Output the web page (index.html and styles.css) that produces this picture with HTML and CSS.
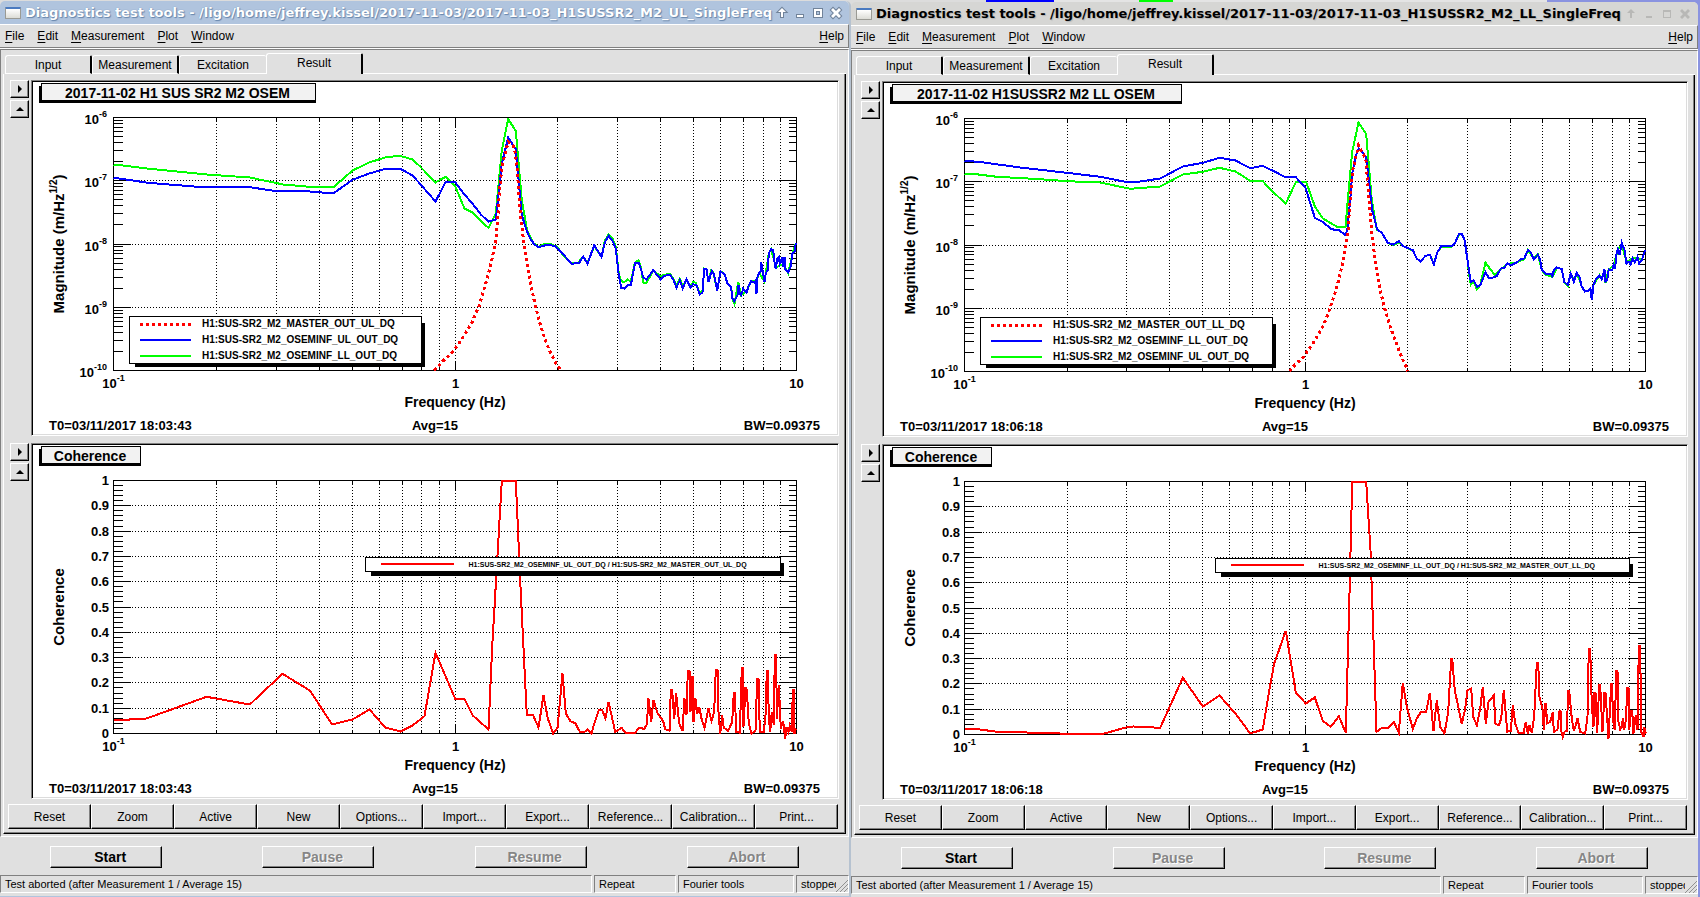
FILE: index.html
```html
<!DOCTYPE html>
<html lang="en">
<head>
  <meta charset="UTF-8" />
  <meta name="viewport" content="width=device-width, initial-scale=1.0" />
  <title>Diagnostics test tools</title>
  <link rel="stylesheet" href="styles.css">
</head>
<body>
  <section class="window active">
    <header class="titlebar">
      <span class="app-icon"></span>
      <h1>Diagnostics test tools - /ligo/home/jeffrey.kissel/2017-11-03/2017-11-03_H1SUSSR2_M2_UL_SingleFreq</h1>
      <div class="controls">
        <button aria-label="Shade"><svg viewBox="0 0 12 12"><path d="M6 1 L10 5 L7 5 L7 10 L5 10 L5 5 L2 5 Z"/></svg></button>
        <button aria-label="Minimize"><svg viewBox="0 0 12 12"><path d="M3 8 H9 V10 H3 Z"/></svg></button>
        <button aria-label="Maximize"><svg viewBox="0 0 12 12"><path fill-rule="evenodd" d="M2 2 H10 V10 H2 Z M4 4 V8 H8 V4 Z"/></svg></button>
        <button aria-label="Close"><svg viewBox="0 0 12 12"><path d="M3 1 L6 4 L9 1 L11 3 L8 6 L11 9 L9 11 L6 8 L3 11 L1 9 L4 6 L1 3 Z"/></svg></button>
      </div>
    </header>
    <nav class="menubar">
      <button><u>F</u>ile</button>
      <button><u>E</u>dit</button>
      <button><u>M</u>easurement</button>
      <button><u>P</u>lot</button>
      <button><u>W</u>indow</button>
      <button class="help"><u>H</u>elp</button>
    </nav>
    <main class="frame">
      <div class="tabs" role="tablist">
        <button role="tab">Input</button>
        <button role="tab">Measurement</button>
        <button role="tab">Excitation</button>
        <button role="tab" class="selected" aria-selected="true">Result</button>
        <span class="tab-rest"></span>
      </div>
      <div class="pane">
        <div class="plot-row">
          <div class="plot-tools">
            <button aria-label="Expand options"><span class="right"></span></button>
            <button aria-label="Maximize pad"><span class="up"></span></button>
          </div>
          <div class="pad"><svg class="plot" data-plot="ulMagnitude"></svg></div>
        </div>
        <div class="plot-row">
          <div class="plot-tools">
            <button aria-label="Expand options"><span class="right"></span></button>
            <button aria-label="Maximize pad"><span class="up"></span></button>
          </div>
          <div class="pad"><svg class="plot" data-plot="ulCoherence"></svg></div>
        </div>
        <div class="actions">
          <button>Reset</button>
          <button>Zoom</button>
          <button>Active</button>
          <button>New</button>
          <button>Options...</button>
          <button>Import...</button>
          <button>Export...</button>
          <button>Reference...</button>
          <button>Calibration...</button>
          <button>Print...</button>
        </div>
      </div>
    </main>
    <div class="run">
      <button>Start</button>
      <button disabled>Pause</button>
      <button disabled>Resume</button>
      <button disabled>Abort</button>
    </div>
    <footer class="status">
      <span class="message">Test aborted (after Measurement 1 / Average 15)</span>
      <span class="repeat">Repeat</span>
      <span class="tools">Fourier tools</span>
      <span class="state">stopped</span>
      <svg class="grip" viewBox="0 0 12 12"><path d="M0 12 L12 0 M4 12 L12 4 M8 12 L12 8"/></svg>
    </footer>
  </section>

  <section class="window">
    <header class="titlebar">
      <span class="app-icon"></span>
      <h1>Diagnostics test tools - /ligo/home/jeffrey.kissel/2017-11-03/2017-11-03_H1SUSSR2_M2_LL_SingleFreq</h1>
      <div class="controls">
        <button aria-label="Shade"><svg viewBox="0 0 12 12"><path d="M6 1 L10 5 L7 5 L7 10 L5 10 L5 5 L2 5 Z"/></svg></button>
        <button aria-label="Minimize"><svg viewBox="0 0 12 12"><path d="M3 8 H9 V10 H3 Z"/></svg></button>
        <button aria-label="Maximize"><svg viewBox="0 0 12 12"><path fill-rule="evenodd" d="M2 2 H10 V10 H2 Z M3 4 V9 H9 V4 Z"/></svg></button>
        <button aria-label="Close"><svg viewBox="0 0 12 12"><path d="M3 1 L6 4 L9 1 L11 3 L8 6 L11 9 L9 11 L6 8 L3 11 L1 9 L4 6 L1 3 Z"/></svg></button>
      </div>
    </header>
    <nav class="menubar">
      <button><u>F</u>ile</button>
      <button><u>E</u>dit</button>
      <button><u>M</u>easurement</button>
      <button><u>P</u>lot</button>
      <button><u>W</u>indow</button>
      <button class="help"><u>H</u>elp</button>
    </nav>
    <main class="frame">
      <div class="tabs" role="tablist">
        <button role="tab">Input</button>
        <button role="tab">Measurement</button>
        <button role="tab">Excitation</button>
        <button role="tab" class="selected" aria-selected="true">Result</button>
        <span class="tab-rest"></span>
      </div>
      <div class="pane">
        <div class="plot-row">
          <div class="plot-tools">
            <button aria-label="Expand options"><span class="right"></span></button>
            <button aria-label="Maximize pad"><span class="up"></span></button>
          </div>
          <div class="pad"><svg class="plot" data-plot="llMagnitude"></svg></div>
        </div>
        <div class="plot-row">
          <div class="plot-tools">
            <button aria-label="Expand options"><span class="right"></span></button>
            <button aria-label="Maximize pad"><span class="up"></span></button>
          </div>
          <div class="pad"><svg class="plot" data-plot="llCoherence"></svg></div>
        </div>
        <div class="actions">
          <button>Reset</button>
          <button>Zoom</button>
          <button>Active</button>
          <button>New</button>
          <button>Options...</button>
          <button>Import...</button>
          <button>Export...</button>
          <button>Reference...</button>
          <button>Calibration...</button>
          <button>Print...</button>
        </div>
      </div>
    </main>
    <div class="run">
      <button>Start</button>
      <button disabled>Pause</button>
      <button disabled>Resume</button>
      <button disabled>Abort</button>
    </div>
    <footer class="status">
      <span class="message">Test aborted (after Measurement 1 / Average 15)</span>
      <span class="repeat">Repeat</span>
      <span class="tools">Fourier tools</span>
      <span class="state">stopped</span>
      <svg class="grip" viewBox="0 0 12 12"><path d="M0 12 L12 0 M4 12 L12 4 M8 12 L12 8"/></svg>
    </footer>
  </section>

  <script src="plots.js"></script>
</body>
</html>
```
FILE: styles.css
```css
* {
  box-sizing: border-box;
}
body {
  margin: 0;
  height: 100vh;
  min-height: 600px;
  padding: 1px 2px 0 0;
  display: grid;
  grid-template-columns: 851fr 847fr;
  overflow: hidden;
  font-family: "Liberation Sans", Arial, sans-serif;
  font-size: 12px;
  color: #000;
  background: linear-gradient(to right, #dcdcdc 58%, #0000ff 58%, #0000ff 62%, #e4e4e4 62%, #e4e4e4 67%, #00ff00 67%, #00ff00 69%, #e4e4e4 69%, #e4e4e4 91%, #8a93e0 91%);
}
button {
  font: inherit;
  color: inherit;
  padding: 0;
  border: 0;
  border-radius: 0;
  background: none;
}
.window {
  display: flex;
  flex-direction: column;
  min-width: 0;
  min-height: 0;
  margin-top: 1px;
  background: #e0e0e0;
  border-radius: 5px 5px 0 0;
}
.window.active {
  margin-top: 0;
  border-right: 2px solid #b6c2d0;
  border-bottom: 1px solid #b0c4de;
}

/* title bar */
.titlebar {
  display: flex;
  align-items: center;
  height: 23px;
  flex: none;
  padding: 0 4px 0 5px;
  background: #d6d6d4;
  color: #000;
  border-radius: 5px 5px 0 0;
}
.active .titlebar {
  background: #b0c4de;
  color: #fff;
}
.app-icon {
  width: 16px;
  height: 12px;
  margin-right: 4px;
  flex: none;
  border: 1px solid #9a9a94;
  border-top: 2px solid #4a7ac0;
  border-radius: 1px;
  background: linear-gradient(#fff, #dcdcd6);
}
.titlebar h1 {
  flex: 1;
  margin: 0;
  min-width: 0;
  white-space: nowrap;
  font: bold 13px/20px "DejaVu Sans", sans-serif;
  text-shadow: 1px 1px 1px #b4b4b4;
}
.active .titlebar h1 {
  text-shadow: 1px 1px 1px #6685ab, 0 0 1px #6685ab;
}
.controls {
  display: flex;
}
.controls button {
  width: 18px;
  height: 18px;
  display: flex;
  align-items: center;
  justify-content: center;
}
.controls svg {
  width: 12px;
  height: 12px;
  fill: #b8b8b6;
  overflow: visible;
}
.active .controls svg {
  fill: #fff;
  stroke: #71839a;
  stroke-width: 2;
  paint-order: stroke;
}

/* menus */
.menubar {
  display: flex;
  align-items: center;
  gap: 13px;
  height: 24px;
  flex: none;
  padding: 0 4px 0 5px;
  border-top: 1px solid #fff;
  border-right: 1px solid #808080;
  border-bottom: 1px solid #808080;
}
.menubar u {
  text-underline-offset: 2px;
}
.menubar .help {
  margin-left: auto;
}

/* tabs and pane */
.frame {
  flex: 1;
  display: flex;
  flex-direction: column;
  min-height: 0;
  margin-top: 1px;
  padding: 3px 2px 2px;
  border: 1px solid #808080;
  border-right-color: #fff;
  border-bottom-color: #fff;
  box-shadow: 0 -1px #fff;
}
.tabs {
  display: flex;
  align-items: flex-end;
  height: 21px;
  flex: none;
}
.tabs button {
  width: 87px;
  height: 19px;
  border: 1px solid #fff;
  border-right: 2px solid #000;
  border-radius: 3px 2px 0 0;
}
.tabs button:first-child {
  margin-left: 2px;
}
.tabs button:nth-child(3) {
  border-right: 0;
}
.tabs .selected {
  width: 97px;
  height: 21px;
  padding-bottom: 3px;
  border-bottom: 0;
}
.tab-rest {
  flex: 1;
  border-bottom: 1px solid #fff;
}
.pane {
  flex: 1;
  display: flex;
  flex-direction: column;
  min-height: 0;
  padding: 6px 5px 3px 4px;
  border-left: 1px solid #fff;
  border-right: 1px solid #000;
  border-bottom: 1px solid #000;
  box-shadow: inset -1px -1px #808080;
}
.plot-row {
  flex: 1 1 0;
  display: flex;
  gap: 2px;
  min-height: 0;
  padding-left: 2px;
  margin-right: 1px;
  margin-bottom: 7px;
}
.plot-row:nth-child(2) {
  margin-bottom: 5px;
}
.plot-tools {
  display: flex;
  flex-direction: column;
  gap: 2px;
}
.plot-tools button,
.actions button,
.run button {
  border: 1px solid #fff;
  border-right-color: #000;
  border-bottom-color: #000;
  box-shadow: inset -1px -1px #808080;
}
.plot-tools button {
  width: 19px;
  height: 18px;
  display: flex;
  align-items: center;
  justify-content: center;
}
.right {
  border: 4px solid transparent;
  border-left-color: #000;
  border-right: 0;
}
.up {
  border: 4px solid transparent;
  border-bottom-color: #000;
  border-top: 0;
}
.pad {
  flex: 1;
  display: flex;
  min-width: 0;
  background: #fff;
  border: 1px solid #808080;
  border-right-color: #fff;
  border-bottom-color: #fff;
  box-shadow: inset 1px 1px #000, inset -1px -1px #dcdcdc;
}
.plot {
  flex: 1;
  min-width: 0;
  min-height: 0;
  margin: 1px;
}
.actions {
  display: flex;
  height: 25px;
  flex: none;
  margin-right: 2px;
  margin-bottom: 1px;
}
.actions button {
  flex: 1 1 0;
  min-width: 0;
}

/* run controls */
.run {
  display: grid;
  grid-template-columns: repeat(4, 1fr);
  justify-items: center;
  flex: none;
  padding: 9px 0 7px;
}
.run button {
  width: 112px;
  height: 22px;
  padding-left: 8px;
  font-weight: bold;
  font-size: 14px;
}
.run button:disabled {
  color: #868686;
  text-shadow: 1px 1px #fff;
}

/* status bar */
.status {
  position: relative;
  display: flex;
  gap: 2px;
  height: 18px;
  flex: none;
  margin-bottom: 3px;
  font-size: 11px;
  line-height: 16px;
}
.status span {
  padding-left: 4px;
  overflow: hidden;
  white-space: nowrap;
  border: 1px solid #808080;
  border-right-color: #fff;
  border-bottom-color: #fff;
}
.message {
  flex: 1;
}
.repeat {
  width: 82px;
}
.tools {
  width: 116px;
}
.state {
  width: 53px;
}
.grip {
  position: absolute;
  right: 1px;
  bottom: 1px;
  width: 12px;
  height: 12px;
  background: #e0e0e0;
  stroke: #909090;
  stroke-width: 1;
}

/* plots */
.plot text {
  font-family: "Liberation Sans", Arial, sans-serif;
  font-weight: bold;
  font-size: 13px;
}
.plot .title {
  font-size: 14px;
}
.plot .ytitle {
  font-size: 15px;
}
.plot .sup {
  font-size: 9px;
}
.plot .ytitle .sup {
  font-size: 10px;
}
.plot .key {
  font-size: 10px;
}
.plot .small {
  font-size: 7px;
}
.plot line,
.plot rect,
.plot polyline {
  shape-rendering: crispEdges;
}
.axis {
  stroke: #000;
  fill: none;
}
.grid {
  stroke: #000;
  stroke-dasharray: 1 2;
}
.box {
  fill: #fff;
  stroke: #000;
}
.title-box {
  fill: #f2f2f2;
  stroke: #000;
}
.trace {
  fill: none;
  stroke-width: 2;
}
.dotted {
  stroke-width: 3;
  stroke-dasharray: 3 3;
}
```
FILE: plots.js
```js
const RED = '#ff0000';
const GREEN = '#00ff00';
const BLUE = '#0000ff';

// traces are digitised on a grid `span` wide and 759 high
const GRID_HEIGHT = 759;

const plots = {
  ulMagnitude: {
    title: '2017-11-02 H1 SUS SR2 M2 OSEM', titleWidth: 275, log: true, span: 2049, t0: 'T0=03/11/2017 18:03:43',
    keys: [
      [RED, 'H1:SUS-SR2_M2_MASTER_OUT_UL_DQ'],
      [BLUE, 'H1:SUS-SR2_M2_OSEMINF_UL_OUT_DQ'],
      [GREEN, 'H1:SUS-SR2_M2_OSEMINF_LL_OUT_DQ']
    ],
    traces: [
      [GREEN, '0,142 29,144 99,153 279,171 409,180 509,201 589,208 659,210 717,159 767,135 817,119 859,115 897,126 919,146 966,195 996,178 1025,206 1053,273 1077,285 1102,311 1125,331 1147,288 1165,98 1184,5 1207,40 1225,248 1241,340 1259,376 1275,388 1294,378 1309,379 1331,388 1349,413 1374,438 1394,435 1409,418 1422,436 1442,386 1464,418 1474,370 1485,351 1497,363 1507,388 1516,468 1523,490 1531,495 1542,486 1552,493 1564,436 1575,428 1583,453 1589,495 1599,496 1619,460 1641,475 1669,468 1681,486 1689,503 1699,483 1708,506 1719,486 1731,506 1739,493 1747,496 1759,528 1767,520 1772,453 1779,455 1785,493 1793,460 1799,465 1811,518 1821,461 1834,471 1841,496 1853,508 1856,541 1863,560 1874,493 1882,533 1899,522 1913,489 1928,492 1937,466 1953,493 1966,408 1973,395 1987,450 2009,440 2024,468 2037,408 2047,378'],
      [BLUE, '0,181 31,185 104,196 279,210 409,209 489,221 579,221 659,228 717,187 767,168 817,154 861,154 897,174 919,198 966,252 996,194 1025,194 1053,231 1077,258 1102,291 1125,312 1147,306 1165,138 1184,61 1207,95 1225,293 1239,338 1249,361 1262,380 1275,389 1304,381 1324,386 1349,410 1374,439 1397,436 1409,417 1422,439 1442,383 1464,418 1474,375 1485,355 1497,370 1507,393 1516,473 1523,511 1532,513 1541,504 1552,503 1565,435 1575,435 1583,456 1589,480 1599,486 1619,458 1641,485 1651,476 1669,471 1679,486 1689,510 1699,488 1708,513 1719,485 1731,511 1739,500 1749,503 1759,531 1767,525 1772,454 1779,455 1785,493 1795,461 1801,468 1811,519 1821,462 1834,471 1841,496 1853,510 1856,541 1863,551 1872,533 1875,503 1879,528 1883,533 1889,513 1893,520 1899,526 1905,506 1913,491 1922,495 1928,488 1929,528 1932,478 1937,466 1941,463 1943,435 1949,468 1953,493 1957,466 1963,458 1966,408 1973,395 1979,398 1982,428 1987,455 1991,423 1996,418 1999,438 2005,423 2009,448 2013,418 2015,456 2024,465 2031,448 2037,408 2044,401 2047,376'],
      [RED, '962,758 989,730 1019,701 1037,676 1056,647 1074,618 1084,594 1097,566 1105,538 1115,503 1125,468 1137,418 1147,368 1153,298 1159,208 1167,138 1184,73 1199,85 1206,108 1212,168 1219,268 1226,338 1231,373 1237,418 1246,471 1256,523 1269,578 1281,623 1296,670 1311,706 1324,731 1341,758', 'dotted']
    ]
  },
  ulCoherence: {
    title: 'Coherence', titleWidth: 100, log: false, span: 2049, t0: 'T0=03/11/2017 18:03:43',
    keys: [[RED, 'H1:SUS-SR2_M2_OSEMINF_UL_OUT_DQ / H1:SUS-SR2_M2_MASTER_OUT_UL_DQ']],
    traces: [
      [RED, '0,719 47,719 49,716 99,714 279,649 409,672 507,580 589,630 656,732 717,717 768,687 815,741 861,753 897,735 933,707 966,517 1025,655 1053,656 1077,704 1125,747 1136,499 1165,1 1207,1 1222,339 1240,704 1259,705 1275,741 1290,644 1303,714 1319,759 1332,742 1347,579 1357,699 1371,722 1386,729 1399,754 1411,756 1422,747 1434,759 1444,724 1456,689 1465,687 1476,714 1485,664 1494,704 1505,754 1524,742 1537,757 1565,758 1575,742 1592,745 1600,732 1605,654 1613,724 1620,659 1631,696 1649,722 1655,746 1668,751 1672,629 1676,629 1682,714 1688,639 1697,729 1707,751 1713,654 1719,704 1723,571 1728,571 1731,694 1735,589 1739,589 1740,724 1746,654 1751,699 1757,679 1764,714 1773,742 1785,684 1794,721 1802,694 1807,567 1812,567 1815,694 1820,759 1826,704 1831,742 1844,751 1856,724 1861,636 1864,636 1868,754 1879,757 1885,561 1888,561 1890,739 1896,621 1900,629 1906,729 1914,759 1926,751 1931,594 1935,594 1939,754 1951,754 1956,704 1960,572 1963,572 1966,709 1970,754 1975,694 1981,734 1984,522 1988,522 1990,714 1996,614 2002,744 2009,722 2015,774 2019,739 2025,754 2029,736 2035,754 2038,629 2042,629 2043,759 2047,744']
    ]
  },
  llMagnitude: {
    title: '2017-11-02 H1SUSSR2 M2 LL OSEM', titleWidth: 290, log: true, span: 2043, t0: 'T0=03/11/2017 18:06:18',
    keys: [
      [RED, 'H1:SUS-SR2_M2_MASTER_OUT_LL_DQ'],
      [BLUE, 'H1:SUS-SR2_M2_OSEMINF_LL_OUT_DQ'],
      [GREEN, 'H1:SUS-SR2_M2_OSEMINF_UL_OUT_DQ']
    ],
    traces: [
      [GREEN, '0,166 42,168 97,175 227,182 307,188 407,192 497,211 587,204 655,168 715,160 765,148 813,159 857,187 895,188 917,213 964,255 994,191 1025,191 1051,263 1075,300 1120,326 1143,326 1149,255 1163,100 1182,12 1205,47 1222,245 1237,333 1252,343 1270,373 1287,380 1303,372 1317,383 1345,397 1357,420 1368,429 1382,413 1396,408 1408,436 1418,402 1430,385 1462,384 1472,373 1483,349 1492,346 1500,365 1509,425 1514,470 1519,498 1527,487 1537,512 1547,500 1563,432 1577,452 1592,470 1609,452 1629,436 1657,432 1679,422 1690,395 1708,420 1720,408 1732,455 1743,468 1764,476 1777,447 1792,452 1799,490 1810,503 1819,465 1828,487 1837,463 1851,502 1861,519 1878,514 1882,530 1887,500 1905,470 1912,482 1920,453 1923,492 1933,453 1948,440 1960,393 1972,377 1986,430 2004,420 2019,418 2032,425 2042,395'],
      [BLUE, '0,127 42,130 167,147 307,163 407,175 477,189 507,192 587,180 655,144 715,133 765,118 813,126 857,149 895,142 917,153 932,160 962,176 994,176 1023,208 1051,298 1075,310 1100,332 1123,335 1143,350 1149,330 1157,245 1163,165 1173,115 1183,90 1205,115 1223,275 1238,333 1252,343 1270,373 1287,378 1303,368 1317,383 1345,395 1357,420 1368,429 1382,413 1396,408 1408,438 1418,402 1430,383 1462,382 1472,373 1483,347 1492,346 1500,363 1509,425 1514,460 1519,490 1527,485 1537,505 1547,500 1563,461 1572,477 1580,480 1597,472 1609,450 1619,448 1629,434 1639,440 1657,432 1667,423 1679,420 1690,395 1698,400 1708,423 1720,408 1727,425 1732,455 1743,465 1757,465 1764,473 1768,455 1777,447 1792,452 1799,490 1810,500 1819,465 1828,490 1837,463 1845,475 1851,502 1861,519 1872,517 1878,510 1882,545 1887,500 1895,480 1905,472 1912,482 1920,453 1923,490 1928,485 1933,453 1943,455 1948,438 1952,450 1955,410 1960,393 1965,410 1972,373 1980,395 1986,435 1993,430 1998,438 2004,420 2011,432 2019,415 2024,435 2032,425 2037,410 2042,395'],
      [RED, '975,758 989,742 1017,715 1037,687 1059,653 1077,620 1089,590 1101,555 1113,520 1125,475 1135,430 1145,370 1151,330 1157,235 1165,155 1182,80 1192,100 1204,120 1210,195 1220,325 1227,385 1235,450 1247,515 1262,575 1277,625 1292,665 1307,705 1327,750 1330,758', 'dotted']
    ]
  },
  llCoherence: {
    title: 'Coherence', titleWidth: 100, log: false, span: 2043, t0: 'T0=03/11/2017 18:06:18',
    keys: [[RED, 'H1:SUS-SR2_M2_OSEMINF_LL_OUT_DQ / H1:SUS-SR2_M2_MASTER_OUT_LL_DQ']],
    traces: [
      [RED, '0,742 32,742 97,751 277,755 307,758 412,758 487,737 507,735 587,739 655,589 715,675 765,642 815,699 857,756 895,744 917,611 929,546 964,448 994,633 1024,666 1051,648 1075,718 1099,736 1123,704 1144,754 1155,336 1163,2 1205,2 1218,206 1229,536 1236,751 1253,739 1272,739 1288,721 1303,754 1315,604 1327,676 1345,742 1357,711 1369,692 1385,691 1396,634 1407,748 1417,656 1427,736 1440,756 1451,691 1460,531 1463,531 1471,626 1492,728 1502,681 1509,626 1520,621 1526,706 1537,731 1547,681 1555,616 1564,726 1572,661 1588,642 1593,726 1603,732 1610,711 1618,626 1628,751 1639,748 1645,671 1652,726 1662,754 1677,756 1684,721 1690,758 1695,731 1702,754 1709,706 1717,544 1721,544 1725,646 1734,681 1738,746 1742,666 1745,666 1747,726 1757,721 1765,691 1768,751 1779,744 1785,688 1788,688 1791,751 1795,766 1800,751 1807,748 1811,628 1814,628 1822,711 1828,748 1834,731 1839,711 1847,751 1862,756 1869,706 1873,501 1877,501 1882,671 1887,736 1890,633 1893,633 1898,754 1904,611 1907,611 1914,751 1920,633 1923,633 1932,771 1940,606 1943,606 1945,711 1951,746 1955,569 1959,569 1961,716 1967,744 1972,736 1975,711 1979,744 1984,716 1989,618 1992,618 1994,746 2000,688 2003,688 2007,756 2014,701 2019,746 2023,493 2027,493 2030,751 2037,766 2039,736 2044,756']
    ]
  }
};

function add(svg, tag, attrs, text) {
  const el = document.createElementNS('http://www.w3.org/2000/svg', tag);
  for (const name in attrs) el.setAttribute(name, attrs[name]);
  if (text !== undefined) el.textContent = text;
  svg.appendChild(el);
  return el;
}

function line(svg, x1, y1, x2, y2, cls) {
  return add(svg, 'line', { x1, y1, x2, y2, class: cls });
}

// text like 10^-7
function power(svg, x, y, exponent, anchor) {
  const t = add(svg, 'text', { x, y, 'text-anchor': anchor }, '10');
  add(t, 'tspan', { class: 'sup', dy: -7 }, exponent);
}

function drawPlot(svg) {
  const plot = plots[svg.dataset.plot];
  const box = svg.getBoundingClientRect();
  const w = Math.round(box.width);
  const h = Math.round(box.height);
  const left = 80.5;
  const right = w - 40.5;
  const top = 35.5;
  const bottom = h - 63.5;
  const snap = v => Math.floor(v) + 0.5;
  const xOf = f => snap(left + (right - left) * (Math.log10(f) + 1) / 2);
  svg.replaceChildren();

  // x grid and ticks
  for (let n = 2; n < 100; n += n < 10 ? 1 : 10) {
    const x = xOf(n / 10);
    const tick = n === 10 ? 9 : 4;
    line(svg, x, top, x, bottom, 'grid');
    line(svg, x, top, x, top + tick, 'axis');
    line(svg, x, bottom, x, bottom - tick, 'axis');
  }

  // y grid, ticks and labels
  const majors = plot.log ? 4 : 10;
  for (let i = 0; i <= majors; i++) {
    const at = k => snap(top + (bottom - top) * k / majors);
    const y = at(i);
    if (i > 0 && i < majors) {
      line(svg, left, y, right, y, 'grid');
      line(svg, left, y, left + 17, y, 'axis');
      line(svg, right - 18, y, right, y, 'axis');
    }
    if (plot.log) {
      power(svg, 74, y + 6, '-' + (6 + i), 'end');
    } else {
      const value = (10 - i) / 10;
      add(svg, 'text', { x: 76, y: y + 4, 'text-anchor': 'end' }, value);
    }
    if (i < majors) {
      const minors = plot.log ? [2, 3, 4, 5, 6, 7, 8, 9].map(n => 1 - Math.log10(n)) : [0.2, 0.4, 0.6, 0.8];
      for (const m of minors) {
        const my = at(i + m);
        line(svg, left, my, left + 9, my, 'axis');
        line(svg, right - 8, my, right, my, 'axis');
      }
    }
  }
  add(svg, 'rect', { x: left, y: top, width: right - left, height: bottom - top, class: 'axis' });

  for (const [color, data, style] of plot.traces) {
    const points = data.split(' ').map(pair => {
      const [x, y] = pair.split(',').map(Number);
      return (left + x / plot.span * (right - left)).toFixed(1) + ',' + (top + y / GRID_HEIGHT * (bottom - top)).toFixed(1);
    }).join(' ');
    add(svg, 'polyline', { points, stroke: color, class: 'trace ' + (style || '') });
  }

  // axis text
  power(svg, left, bottom + 17, '-1', 'middle');
  add(svg, 'text', { x: xOf(1), y: bottom + 17, 'text-anchor': 'middle' }, '1');
  add(svg, 'text', { x: right, y: bottom + 17, 'text-anchor': 'middle' }, '10');
  add(svg, 'text', { x: (left + right) / 2, y: bottom + 36, 'text-anchor': 'middle', class: 'title' }, 'Frequency (Hz)');
  const mid = (top + bottom) / 2;
  const yTitle = add(svg, 'text', { x: 31, y: mid, 'text-anchor': 'middle', class: 'ytitle', transform: `rotate(-90 31 ${mid})` }, plot.log ? 'Magnitude (m/Hz' : 'Coherence');
  if (plot.log) {
    add(yTitle, 'tspan', { class: 'sup', dy: -7 }, '1/2');
    add(yTitle, 'tspan', { dy: 7 }, ')');
  }
  add(svg, 'text', { x: 16, y: h - 4 }, plot.t0);
  add(svg, 'text', { x: w / 2, y: h - 4, 'text-anchor': 'middle' }, 'Avg=15');
  add(svg, 'text', { x: w - 17, y: h - 4, 'text-anchor': 'end' }, 'BW=0.09375');

  // title
  add(svg, 'rect', { x: 6, y: 4, width: plot.titleWidth + 2, height: 17 });
  add(svg, 'rect', { x: 8.5, y: 1.5, width: plot.titleWidth - 1, height: 17, class: 'title-box' });
  add(svg, 'text', { x: 7 + plot.titleWidth / 2, y: 16, 'text-anchor': 'middle', class: 'title' }, plot.title);

  // legend
  if (plot.log) {
    const y = bottom - 54;
    add(svg, 'rect', { x: 102, y: y + 6, width: 290, height: 44 });
    add(svg, 'rect', { x: 96.5, y, width: 292, height: 47, class: 'box' });
    plot.keys.forEach(([color, name], i) => {
      const row = y + 7.5 + 16 * i;
      const key = line(svg, 107, row, 158, row, i === 0 ? 'trace dotted' : 'trace');
      key.setAttribute('stroke', color);
      add(svg, 'text', { x: 169, y: row + 3, class: 'key' }, name);
    });
  } else {
    const x = Math.floor(w * 0.413) + 0.5;
    const x2 = Math.floor(w * 0.93) + 0.5;
    const y = snap(top + (bottom - top) * 0.304);
    add(svg, 'rect', { x: x + 5.5, y: y + 5, width: x2 - x - 2, height: 13 });
    add(svg, 'rect', { x, y, width: x2 - x, height: 14, class: 'box' });
    const key = line(svg, x + 15, y + 6.5, x + 88, y + 6.5, 'trace');
    key.setAttribute('stroke', plot.keys[0][0]);
    add(svg, 'text', { x: x + 103, y: y + 9, class: 'small' }, plot.keys[0][1]);
  }
}

function drawAll() {
  document.querySelectorAll('.plot').forEach(drawPlot);
}

window.addEventListener('resize', drawAll);
drawAll();
```
